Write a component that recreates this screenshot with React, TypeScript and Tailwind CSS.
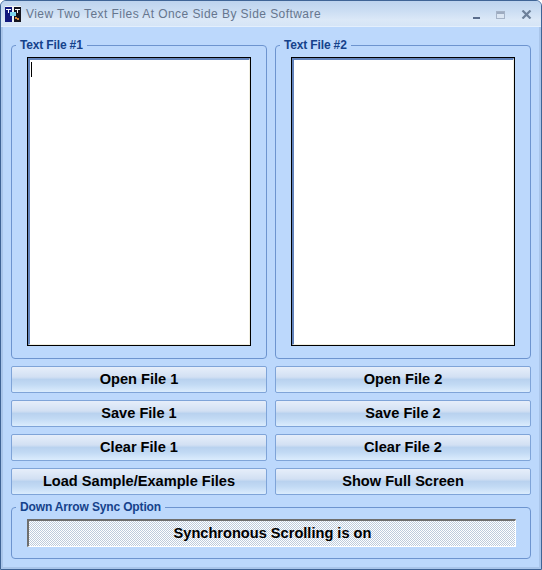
const font = "font-['Liberation_Sans',Arial,sans-serif]";

function AppIcon() {
  return (
    <svg width="16" height="16" viewBox="0 0 16 16" shapeRendering="crispEdges" className="shrink-0">
      <rect x="0" y="0" width="16" height="16" fill="#f4f4f4" />
      <rect x="0" y="1" width="7" height="15" fill="#12187c" />
      <rect x="9" y="1" width="7" height="15" fill="#15151f" />
      <rect x="1" y="3" width="5" height="1" fill="#fff" />
      <rect x="3" y="3" width="1" height="4" fill="#fff" />
      <rect x="10" y="3" width="5" height="1" fill="#fff" />
      <rect x="12" y="3" width="1" height="4" fill="#fff" />
      <rect x="5" y="6" width="6" height="4" fill="#7fd4ee" />
      <rect x="7" y="10" width="2" height="4" fill="#e9f4fa" />
      <path d="M10 11h2v1h2v2h-2v-1h-2z" fill="#d98a3c" />
    </svg>
  );
}

function WindowControls() {
  return (
    <div className="flex items-center gap-[16px] mr-[9px]">
      <svg width="7" height="3" viewBox="0 0 7 3" shapeRendering="crispEdges" className="mt-[10px]">
        <rect width="7" height="2" y="0" fill="#5a6d8c" />
        <rect width="7" height="1" y="2" fill="#dcebfb" />
      </svg>
      <svg width="9" height="8" viewBox="0 0 9 8" shapeRendering="crispEdges" className="mt-[3px]">
        <rect x="0.5" y="0.5" width="8" height="7" fill="#dbe6f3" stroke="#a5b3c7" />
        <rect x="1" y="1" width="7" height="2" fill="#9dabc0" />
      </svg>
      <svg width="11" height="9" viewBox="0 0 11 9" className="mt-[2px]">
        <path d="M1.5 0.5l8 8M9.5 0.5l-8 8" stroke="#6d8099" strokeWidth="2.2" fill="none" />
      </svg>
    </div>
  );
}

function GroupBox({
  title,
  className,
  children,
}: {
  title: string;
  className: string;
  children: React.ReactNode;
}) {
  return (
    <fieldset className={`border border-[#6d94cf] rounded-[4px] min-w-0 ${className}`}>
      <legend className="ml-[4px] px-[4px] text-[12px] leading-[14px] tracking-[-0.15px] font-bold text-[#15428b]">
        {title}
      </legend>
      {children}
    </fieldset>
  );
}

function TextBox({ caret }: { caret?: boolean }) {
  return (
    <div className="relative h-[289px] w-[224px] border border-black bg-white mx-auto mt-[5px]">
      <div className="h-full w-full border-t-2 border-l-2 border-t-[#6283bb] border-l-[#6283bb] border-r border-b border-r-[#f1efe2] border-b-[#f1efe2]" />
      {caret && <div className="absolute left-[3px] top-[4px] h-[15px] w-px bg-black" />}
    </div>
  );
}

function ActionButton({ label }: { label: string }) {
  return (
    <button
      type="button"
      className="h-[27px] w-[256px] rounded-[2px] border border-[#7fa4d8] bg-[linear-gradient(to_bottom,#e6eefa_0%,#d2e0f3_40%,#b9d2ef_50%,#c2daf4_70%,#dbecfd_100%)] text-[14.6px] font-bold text-black leading-none"
    >
      {label}
    </button>
  );
}

export default function App() {
  return (
    <div className={`${font} w-[542px] h-[570px] overflow-hidden rounded-t-[6px] border border-[#3f6496] bg-[#bcd8fc] flex flex-col`}>
      {/* title bar */}
      <div className="h-[26px] shrink-0 flex items-center pl-[4px] border-b border-[#e4effc] bg-[linear-gradient(to_bottom,#bdd3ee_0%,#c9dcf2_35%,#dbe8f7_75%,#d6e5f6_100%)]">
        <AppIcon />
        <span className="ml-[5px] text-[12px] text-[#66768e] tracking-[0.44px]">
          View Two Text Files At Once Side By Side Software
        </span>
        <div className="ml-auto">
          <WindowControls />
        </div>
      </div>

      <div className="flex-1 border-x-2 border-b-2 border-[#a9c5ea] px-[8px] pt-[11px] flex flex-col">
        <div className="flex gap-[8px]">
          <GroupBox title="Text File #1" className="w-[256px] h-[321px]">
            <TextBox caret />
          </GroupBox>
          <GroupBox title="Text File #2" className="w-[256px] h-[321px]">
            <TextBox />
          </GroupBox>
        </div>

        <div className="grid grid-cols-[256px_256px] gap-x-[8px] gap-y-[7px] mt-[7px]">
          <ActionButton label="Open File 1" />
          <ActionButton label="Open File 2" />
          <ActionButton label="Save File 1" />
          <ActionButton label="Save File 2" />
          <ActionButton label="Clear File 1" />
          <ActionButton label="Clear File 2" />
          <ActionButton label="Load Sample/Example Files" />
          <ActionButton label="Show Full Screen" />
        </div>

        <GroupBox title="Down Arrow Sync Option" className="w-[520px] h-[59px] mt-[5px]">
          <div className="h-[28px] w-[489px] ml-[15px] mt-[5px] pl-px border-t-2 border-l-2 border-t-[#6e6e6e] border-l-[#6e6e6e] border-r border-b border-r-white border-b-white bg-[repeating-conic-gradient(#ffffff_0_25%,#bdcbdc_0_50%)] bg-[length:2px_2px] flex items-center justify-center text-[14.6px] font-bold text-black">
            Synchronous Scrolling is on
          </div>
        </GroupBox>
      </div>
    </div>
  );
}
